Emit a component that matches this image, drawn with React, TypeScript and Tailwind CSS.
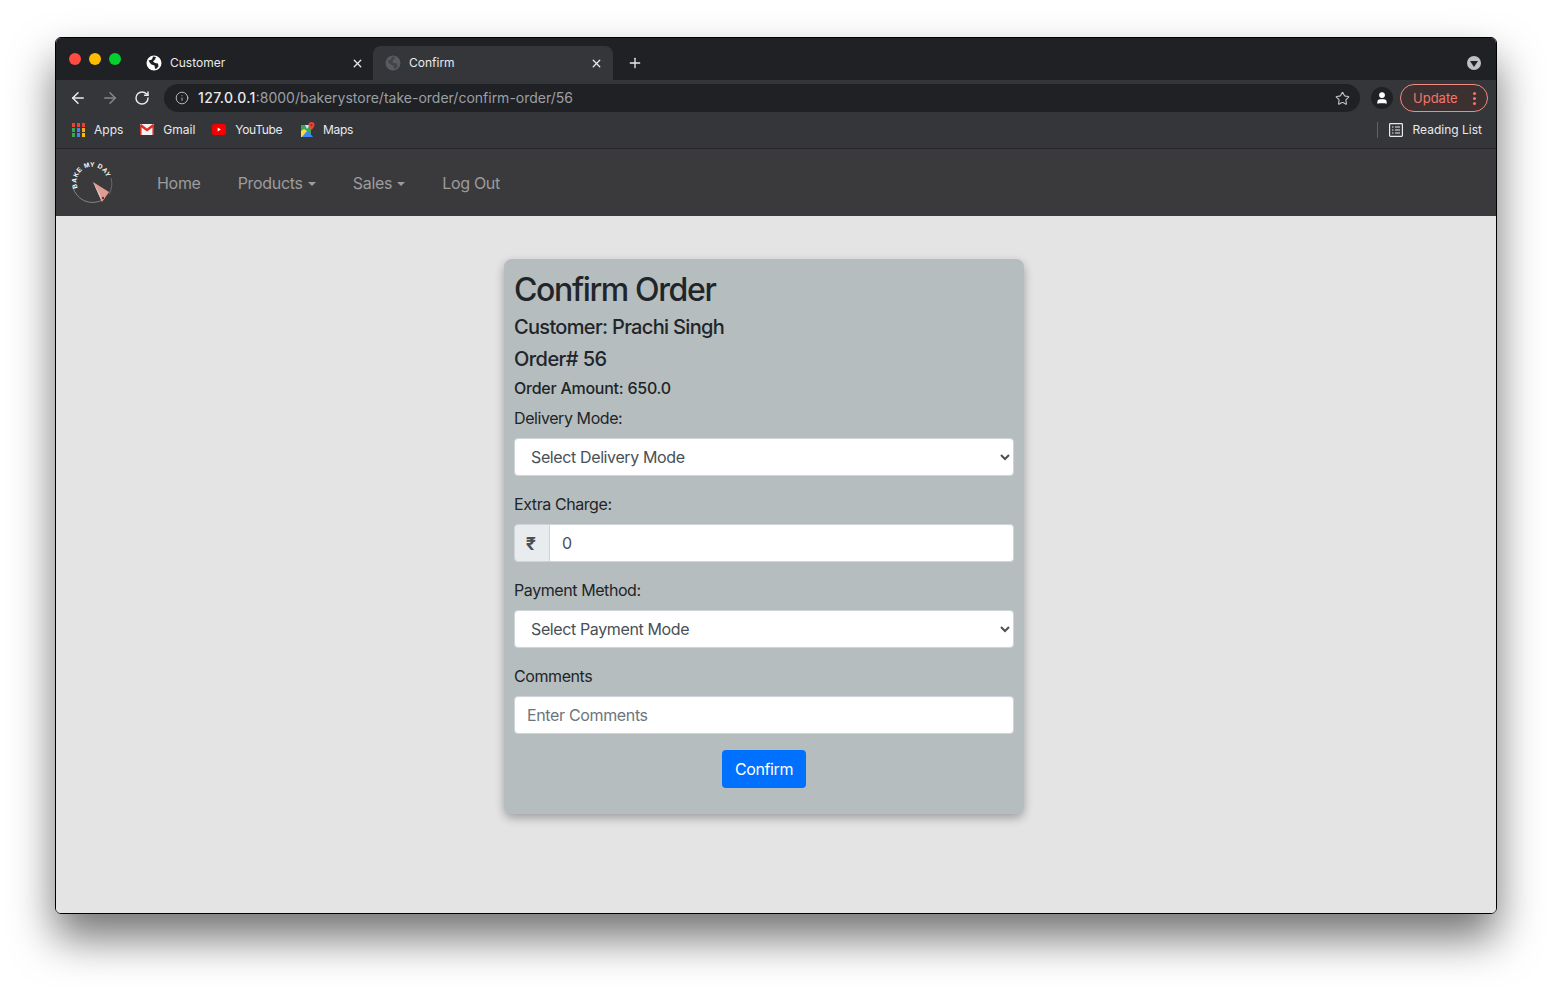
import React from 'react';
import { ArrowLeft, ArrowRight, RotateCw, Info, Star, X, Plus, User } from 'lucide-react';

const Globe: React.FC<{ fill: string; cut: string }> = ({ fill, cut }) => (
  <svg width="16" height="16" viewBox="0 0 16 16">
    <circle cx="8" cy="8" r="7.5" fill={fill} />
    <path d="M2.5 5.5 6 4.5l1-3 3 .5-1 2.5-2 2 2 1.5 3 .5 .5 3-2.5 2.5-1-.5-.5-3-3-1-1.5-1.5z" fill={cut} />
  </svg>
);

const AppsIcon = () => {
  const colors = ['#ea4335', '#ea4335', '#ea4335', '#34a853', '#4285f4', '#f5a623', '#34a853', '#4285f4', '#fbbc05'];
  return (
    <div className="grid grid-cols-3 gap-x-[2px] gap-y-[1px] w-[13px]">
      {colors.map((c, i) => (
        <svg key={i} width="3" height="4" viewBox="0 0 3 4" className="block">
          <rect width="3" height="4" fill={c} />
        </svg>
      ))}
    </div>
  );
};

const GmailIcon = () => (
  <svg width="14" height="11" viewBox="0 0 14 11">
    <rect width="14" height="11" rx="1" fill="#f4f4f4" />
    <path d="M0 1.2V11h1.6V3.4L7 7.6l5.4-4.2V11H14V1.2L12.8 0 7 4.6 1.2 0z" fill="#d93025" />
  </svg>
);

const YoutubeIcon = () => (
  <svg width="14" height="11" viewBox="0 0 14 11">
    <rect width="14" height="11" rx="2.5" fill="#f40000" />
    <path d="M5.6 3.4 9 5.5 5.6 7.6z" fill="#fff" />
  </svg>
);

const MapsIcon = () => (
  <svg width="14" height="15" viewBox="0 0 14 15">
    <path d="M0 3h10v12H0z" fill="#34a853" />
    <path d="M1 15 6.5 8.5 12 15z" fill="#4285f4" />
    <path d="M0 15V9l3-2 3 2-5 6z" fill="#fbdc45" />
    <path d="M4 3h5L6 7z" fill="#d7e3f5" />
    <path d="M10.5 0a3 3 0 0 1 3 3c0 2-3 5-3 5s-3-3-3-5a3 3 0 0 1 3-3z" fill="#ea4335" />
    <circle cx="10.5" cy="3" r="1" fill="#8f2a20" />
  </svg>
);

const ReadingListIcon = () => (
  <svg width="14" height="14" viewBox="0 0 14 14" fill="none" stroke="#e8eaed" strokeWidth="1.2">
    <rect x="0.6" y="0.6" width="12.8" height="12.8" rx="0.8" />
    <path d="M3 4h1.5M6 4h5M3 7h1.5M6 7h5M3 10h1.5M6 10h5" />
  </svg>
);

const Logo = () => (
  <svg width="42" height="42" viewBox="0 0 42 42">
    <defs>
      <path id="logoArc" d="M6.6 26A15.5 15.5 0 1 1 36.4 22" fill="none" />
    </defs>
    <path d="M2 25A20 20 0 0 0 34 36" fill="none" stroke="#9a9a9c" strokeWidth="0.8" />
    <path d="M40 16A20 20 0 0 1 38 32" fill="none" stroke="#77777a" strokeWidth="0.8" />
    <text fill="#fff" fontSize="6.6" fontWeight="700" fontFamily="'Liberation Sans', sans-serif" letterSpacing="0.35">
      <textPath href="#logoArc">BAKE MY DAY</textPath>
    </text>
    <path d="M22 20 38 30 31 40z" fill="#df9c92" />
    <path d="M22 20 29 32 31 40z" fill="#d9c7c2" />
    <circle cx="32" cy="36" r="1.2" fill="#8f1f1f" />
  </svg>
);

const Caret = () => (
  <span className="inline-block ml-[5px] align-[3px] w-0 h-0 border-t-[4.8px] border-t-current border-x-[4.8px] border-x-transparent" />
);

const Tab: React.FC<{ title: string; active?: boolean }> = ({ title, active }) => (
  <div className={`w-[240px] h-[34px] flex items-center rounded-t-[8px] ${active ? 'bg-[#35363a] pl-[12px] pr-[10px]' : 'pl-[13px] pr-[9px]'}`}>
    {active ? <Globe fill="#5a5b60" cut="#43444a" /> : <Globe fill="#ffffff" cut="#202124" />}
    <span className="ml-[8px] text-[12px] text-[#e8eaed] flex-1">{title}</span>
    <X className="w-[13px] h-[13px] text-[#e8eaed]" strokeWidth={2.4} />
  </div>
);

const Bookmark: React.FC<{ icon: React.ReactNode; label: string; tight?: boolean; gap?: string }> = ({ icon, label, tight, gap = 'gap-[9px]' }) => (
  <div className={`flex items-center ${gap}`}>
    <div className="w-[14px] flex justify-center">{icon}</div>
    <span className={`text-[12px] text-[#e8eaed] ${tight ? 'tracking-[-0.35px]' : ''}`}>{label}</span>
  </div>
);

const selectCls = 'w-full h-[38px] bg-white border border-[#ced4da] rounded-[4px] pl-[12px] pr-[8px] text-[16px] tracking-[-0.38px] text-[#495057] outline-none';
const labelCls = 'block text-[16px] leading-[24px] tracking-[-0.42px]';

const App: React.FC = () => (
  <div className="w-[1552px] h-[987px] bg-white pt-[37px] pl-[55px] overflow-hidden font-['Inter','Liberation_Sans',sans-serif]">
    <div className="w-[1442px] h-[877px] flex flex-col rounded-[6px] border border-black overflow-hidden shadow-[0_24px_44px_rgba(0,0,0,0.55)]">
      {/* Tab strip */}
      <div className="h-[42px] bg-[#202124] flex items-end shrink-0 relative">
        <div className="flex items-center gap-[8px] pl-[13px] pb-[15px] w-[77px] shrink-0">
          <span className="w-[12px] h-[12px] rounded-full bg-[#ff4b42]" />
          <span className="w-[12px] h-[12px] rounded-full bg-[#fdbc00]" />
          <span className="w-[12px] h-[12px] rounded-full bg-[#05cf2f]" />
        </div>
        <Tab title="Customer" />
        <Tab title="Confirm" active />
        <Plus className="w-[16px] h-[16px] text-[#e8eaed] ml-[14px] mb-[9px]" strokeWidth={2} />
        <div className="ml-auto mr-[15px] mb-[10px] w-[14px] h-[14px] rounded-full bg-[#bdc1c6] flex items-center justify-center">
          <span className="w-0 h-0 mt-[1px] border-t-[6px] border-t-[#202124] border-x-[4px] border-x-transparent" />
        </div>
      </div>

      {/* Toolbar */}
      <div className="h-[32px] bg-[#35363a] flex items-end shrink-0">
        <div className="flex items-center h-[28px] pl-[13px] gap-[14px] w-[108px] shrink-0">
          <ArrowLeft className="w-[18px] h-[18px] text-[#e8eaed]" strokeWidth={2} />
          <ArrowRight className="w-[18px] h-[18px] text-[#85878a]" strokeWidth={2} />
          <RotateCw className="ml-[1px] w-[16px] h-[16px] text-[#e8eaed]" strokeWidth={2.2} />
        </div>
        <div className="w-[1196px] h-[28px] rounded-full bg-[#202124] flex items-center pl-[11px] pr-[10px] shrink-0">
          <Info className="w-[14px] h-[14px] text-[#bdc1c6]" strokeWidth={1.6} />
          <span className="ml-[9px] text-[14px] leading-none text-[#9aa0a6]">
            <span className="text-[#e8eaed] font-medium tracking-[0.35px]">127.0.0.1</span>:8000/bakerystore/take-order/confirm-order/56
          </span>
          <Star className="ml-auto w-[15px] h-[15px] text-[#bdc1c6]" strokeWidth={1.8} />
        </div>
        <div className="ml-[11px] mb-[3px] w-[22px] h-[22px] rounded-full bg-[#202124] flex items-center justify-center">
          <User className="w-[14px] h-[14px] text-white fill-white" strokeWidth={2} />
        </div>
        <div className="ml-[7px] w-[88px] h-[28px] rounded-full border border-[#f28b82] bg-[#3d3031] flex items-center pl-[12px] pr-[11px] justify-between">
          <span className="text-[13px] mt-[1px] text-[#f2766c]">Update</span>
          <span className="flex flex-col gap-[2px]">
            <span className="w-[3px] h-[3px] rounded-full bg-[#f2766c]" />
            <span className="w-[3px] h-[3px] rounded-full bg-[#f2766c]" />
            <span className="w-[3px] h-[3px] rounded-full bg-[#f2766c]" />
          </span>
        </div>
      </div>

      {/* Bookmarks */}
      <div className="h-[37px] bg-[#35363a] border-b border-[#27282b] flex items-center pl-[15px] pr-[14px] pb-[1px] shrink-0">
        <Bookmark icon={<AppsIcon />} label="Apps" />
        <div className="ml-[17px]"><Bookmark icon={<GmailIcon />} label="Gmail" /></div>
        <div className="ml-[17px]"><Bookmark icon={<YoutubeIcon />} label="YouTube" tight /></div>
        <div className="ml-[19px]"><Bookmark icon={<MapsIcon />} label="Maps" tight gap="gap-[8px]" /></div>
        <div className="ml-auto w-px h-[16px] bg-[#5f6368]" />
        <div className="ml-[11px]"><Bookmark icon={<ReadingListIcon />} label="Reading List" gap="gap-[10px]" /></div>
      </div>

      {/* Navbar */}
      <div className="h-[67px] bg-[#3a3a3c] flex items-center pl-[15px] shrink-0">
        <Logo />
        <nav className="ml-[44px] flex items-center gap-[37px] text-[16px] tracking-[-0.3px] text-[#9c9c9d]">
          <span>Home</span>
          <span>Products<Caret /></span>
          <span>Sales<Caret /></span>
          <span>Log Out</span>
        </nav>
      </div>

      {/* Page */}
      <div className="flex-1 bg-[#e4e4e4] pt-[43px] pl-[448px]">
        <div className="w-[520px] h-[555px] rounded-[8px] bg-[#b6bdbe] px-[10px] pt-[12px] shadow-[0_4px_10px_rgba(0,0,0,0.3)] text-[#212529]">
          <h2 className="text-[32px] leading-[38px] font-medium tracking-[-1.38px]">Confirm Order</h2>
          <h4 className="mt-[6px] text-[20px] leading-[24px] font-medium tracking-[-0.68px]">Customer: Prachi Singh</h4>
          <h4 className="mt-[8px] text-[20px] leading-[24px] font-medium tracking-[-0.55px]">Order# 56</h4>
          <h5 className="mt-[8px] text-[16px] leading-[19px] font-medium tracking-[-0.25px]">Order Amount: 650.0</h5>
          <label className={`mt-[8px] ${labelCls}`}>Delivery Mode:</label>
          <select className={`mt-[8px] ${selectCls}`} defaultValue="">
            <option value="">Select Delivery Mode</option>
          </select>
          <label className={`mt-[16px] ${labelCls}`}>Extra Charge:</label>
          <div className="mt-[8px] h-[38px] flex">
            <div className="w-[36px] pr-[2px] bg-[#e9ecef] border border-[#ced4da] rounded-l-[4px] flex items-center justify-center text-[18px] font-bold text-[#495057]">₹</div>
            <input
              readOnly
              value="0"
              className="flex-1 min-w-0 bg-white border border-l-0 border-[#ced4da] rounded-r-[4px] px-[12px] text-[16px] text-[#495057] outline-none"
            />
          </div>
          <label className={`mt-[16px] ${labelCls}`}>Payment Method:</label>
          <select className={`mt-[8px] ${selectCls}`} defaultValue="">
            <option value="">Select Payment Mode</option>
          </select>
          <label className={`mt-[16px] ${labelCls}`}>Comments</label>
          <input
            readOnly
            placeholder="Enter Comments"
            className="mt-[8px] w-full h-[38px] bg-white border border-[#ced4da] rounded-[4px] px-[12px] text-[16px] tracking-[-0.35px] text-[#495057] placeholder-[#6c757d] outline-none"
          />
          <div className="mt-[16px] flex justify-center">
            <button className="h-[38px] w-[84px] rounded-[4px] bg-[#0070ff] text-white text-[16px] tracking-[-0.4px]">Confirm</button>
          </div>
        </div>
      </div>
    </div>
  </div>
);

export default App;
